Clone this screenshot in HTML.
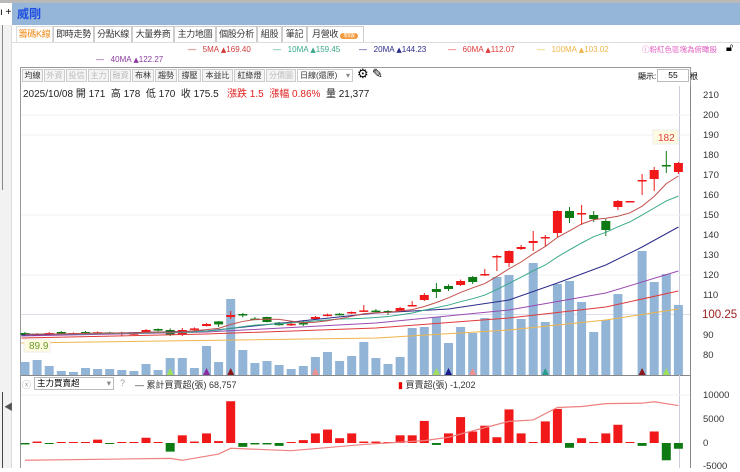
<!DOCTYPE html>
<html><head><meta charset="utf-8"><style>
*{margin:0;padding:0;box-sizing:border-box}
body{width:740px;height:468px;overflow:hidden;background:#fff;font-family:"Liberation Sans","Noto Sans CJK TC",sans-serif;position:relative}
.a{position:absolute;white-space:nowrap}
.tab{position:absolute;top:26px;height:17px;border:1px solid #ccc;border-bottom:none;background:#fff;font-size:9px;line-height:15px;text-align:center;color:#333;white-space:nowrap;overflow:hidden;letter-spacing:-0.3px}
.tb{position:absolute;top:69px;height:13px;border:1px solid #ccc;font-size:8px;line-height:11px;text-align:center;color:#333;background:#f4f4f4;white-space:nowrap;overflow:hidden}
.tb.g{color:#bbb}
.ax{position:absolute;left:703px;font-size:9.5px;color:#333}
.lg{position:absolute;top:45px;font-size:8px;white-space:nowrap}
.t{font-family:"DejaVu Sans",sans-serif;font-size:7px}
</style></head><body>
<div class="a" style="left:0;top:0;width:740px;height:3px;background:#b9b9b9"></div>
<div class="a" style="left:0;top:3px;width:740px;height:22px;background:#95b5d9"></div>
<div class="a" style="left:0;top:3px;width:12px;height:22px;background:#fff;font-size:10px;line-height:20px">ı +</div>
<div class="a" style="left:17px;top:5px;font-size:12px;font-weight:bold;color:#1f4fe0">威剛</div>
<div class="a" style="left:0;top:25px;width:12px;height:443px;background:#f2f2f2;border-right:1px solid #ddd"></div>
<div class="a" style="left:2px;top:25px;width:1px;height:165px;background:#888"></div>
<div class="a" style="left:2px;top:392px;width:1px;height:76px;background:#444"></div>
<div class="a" style="left:4px;top:400px;font-size:9px;color:#555">◀</div>
<div class="tab" style="left:16px;width:37px;color:#f08a17;border-color:#ddd">籌碼K線</div>
<div class="tab" style="left:53px;width:41px">即時走勢</div>
<div class="tab" style="left:94px;width:38px">分點K線</div>
<div class="tab" style="left:132px;width:42px">大量券商</div>
<div class="tab" style="left:174px;width:42px">主力地圖</div>
<div class="tab" style="left:216px;width:41px">個股分析</div>
<div class="tab" style="left:257px;width:25px">組股</div>
<div class="tab" style="left:282px;width:25px">筆記</div>
<div class="tab" style="left:307px;width:57px;text-align:left;padding-left:4px">月營收 <span style="background:#f39a3c;color:#fff;border-radius:6px;font-size:6px;padding:0 3px">新版</span></div>
<div class="a" style="left:12px;top:42px;width:728px;height:1px;background:#ddd"></div>
<div class="lg" style="left:188px;color:#d23a3a">—&nbsp;&nbsp; 5MA <span class="t">▲</span>169.40</div>
<div class="lg" style="left:273px;color:#3aa88b">—&nbsp;&nbsp; 10MA <span class="t">▲</span>159.45</div>
<div class="lg" style="left:359px;color:#2c2c8a">—&nbsp;&nbsp; 20MA <span class="t">▲</span>144.23</div>
<div class="lg" style="left:448px;color:#e03a3a">—&nbsp;&nbsp; 60MA <span class="t">▲</span>112.07</div>
<div class="lg" style="left:537px;color:#f0b54a">—&nbsp;&nbsp; 100MA <span class="t">▲</span>103.02</div>
<div class="lg" style="top:44px;left:642px;font-size:7.5px;color:#e060c0">ⓘ粉紅色區塊為俯瞰股</div>
<div class="a" style="top:42px;left:726px;font-size:11px">🔓︎</div>
<div class="lg" style="top:55px;left:96px;color:#8a3aa0">—&nbsp;&nbsp; 40MA <span class="t">▲</span>122.27</div>
<div class="a" style="left:20px;top:67px;width:671px;height:401px;border:1px solid #999;border-bottom:none"></div>
<div class="tb" style="left:22px;width:21px">均線</div>
<div class="tb g" style="left:44px;width:21px">外資</div>
<div class="tb g" style="left:66px;width:21px">投信</div>
<div class="tb g" style="left:88px;width:21px">主力</div>
<div class="tb g" style="left:110px;width:21px">融資</div>
<div class="tb" style="left:132px;width:22px">布林</div>
<div class="tb" style="left:155px;width:22px">趨勢</div>
<div class="tb" style="left:178px;width:23px">撐壓</div>
<div class="tb" style="left:202px;width:31px">本益比</div>
<div class="tb" style="left:234px;width:31px">紅綠燈</div>
<div class="tb g" style="left:266px;width:30px">分價圖</div>
<div class="tb" style="left:297px;width:56px;background:#fff;text-align:left;padding-left:2px">日線(還原) <span style="float:right;color:#888;padding-right:2px">▾</span></div>
<div class="a" style="left:357px;top:66px;font-size:13px">⚙</div>
<div class="a" style="left:372px;top:66px;font-size:13px">✎</div>
<div class="a" style="left:638px;top:71px;font-size:8px">顯示:</div>
<div class="a" style="left:657px;top:69px;width:32px;height:13px;border:1px solid #bbb;font-size:8.5px;text-align:center;line-height:11px">55</div>
<div class="a" style="left:690px;top:71px;font-size:8px">根</div>
<div class="a" style="left:23px;top:85px;font-size:10px;color:#222">2025/10/08 開 171&nbsp; 高 178&nbsp; 低 170&nbsp; 收 175.5&nbsp;&nbsp; <span style="color:#e02020">漲跌 1.5&nbsp; 漲幅 0.86%</span>&nbsp; 量 21,377</div>
<div class="ax" style="top:90px">210</div><div class="ax" style="top:110px">200</div><div class="ax" style="top:130px">190</div><div class="ax" style="top:150px">180</div><div class="ax" style="top:170px">170</div><div class="ax" style="top:190px">160</div><div class="ax" style="top:210px">150</div><div class="ax" style="top:230px">140</div><div class="ax" style="top:250px">130</div><div class="ax" style="top:270px">120</div><div class="ax" style="top:290px">110</div><div class="ax" style="top:330px">90</div><div class="ax" style="top:350px">80</div>
<div class="ax" style="top:309px;font-size:11.5px;color:#a02020;left:702px">100.25</div>
<div class="ax" style="top:390px">10000</div><div class="ax" style="top:414px">5000</div><div class="ax" style="top:438px">0</div><div class="ax" style="top:461px">-5000</div>
<div class="a" style="left:22px;top:378px;font-size:9px;color:#999">ⓧ</div>
<div class="a" style="left:34px;top:377px;width:80px;height:13px;border:1px solid #bbb;font-size:8.5px;line-height:11px;padding-left:2px">主力買賣超<span style="float:right;color:#888;padding-right:2px">▾</span></div>
<div class="a" style="left:120px;top:378px;font-size:9px;color:#999">?</div>
<div class="a" style="left:135px;top:378px;font-size:9px;color:#333">— 累計買賣超(張) 68,757</div>
<div class="a" style="left:398px;top:378px;font-size:9px;color:#333"><span style="color:#e00">▮</span> 買賣超(張) -1,202</div>
<svg class="a" style="left:0;top:0" width="740" height="468" id="s"></svg>
<script>
var S=document.getElementById('s'),h='';
function y(p){return 95+(210-p)*2}
function X(i){return 25+i*12.1}
h+='<line x1="21" y1="375.5" x2="690" y2="375.5" stroke="#888"/>';
h+='<line x1="690.5" y1="86" x2="690.5" y2="468" stroke="#888"/>';
h+='<line x1="679.5" y1="86" x2="679.5" y2="468" stroke="#ccd"/>';
[200,190,150,120].forEach(function(p){h+='<line x1="21" y1="'+y(p)+'" x2="690" y2="'+y(p)+'" stroke="#f0f0f0"/>'});
h+='<line x1="21" y1="'+y(100.25)+'" x2="690" y2="'+y(100.25)+'" stroke="#dde"/>';
h+='<line x1="21" y1="395" x2="690" y2="395" stroke="#f0f0f0"/>';
var vt=[362,360,366,371,372,368,369,369,370,371,364,370,358,358,368,346,362,299,350,363,361,365,369,366,357,352,361,356,342,358,364,357,328,327,317,343,327,333,318,277,275,319,263,322,284,281,302,332,320,294,375,251,282,274,305];
vt.forEach(function(t,i){h+='<rect x="'+(X(i)-4.5)+'" y="'+t+'" width="9" height="'+(375-t)+'" fill="#92b4d6"/>'});
var c=[[91,90,91.5,89.5],[90.5,90.5,91,90],[90.5,91,91.5,90],[91.5,90.8,92,90.5],[91,91,91.3,90.7],[91.5,90.8,92,90.5],[90.8,91.4,91.8,90.5],[91.3,90.8,91.6,90.5],[90.5,91.2,91.6,89.5],[90.4,90.9,91.2,90],[91.5,92.5,93,91.3],[93,92.2,93.3,91.8],[92.5,90,93.3,89.5],[90,92.5,93.5,89.5],[92.6,93.3,93.8,92.3],[94.5,95.5,96,94.3],[96.8,95.3,97,94],[99,100,102,98],[100.5,99.8,101,98.8],[98.2,98,99,97.4],[99,96.5,99.2,96.3],[96.2,94.9,96.5,94.7],[94.8,95.6,96,94.5],[96,95.8,97.5,94.5],[98,99,99.5,97.8],[99.6,100.2,100.7,99.3],[100.6,100.2,101,99.8],[100.8,101.5,101.8,100.5],[101.8,102.3,105,101.5],[102.2,101.5,103,101],[102,101.2,102.5,100],[102,103.5,104,101.5],[104.8,105,107,104.5],[107.5,110,111,107],[113,111.5,116,108.5],[114.5,113,115.3,112],[115,117,117.7,114.5],[119,116.5,119.5,115.5],[120.2,120.5,123,119.5],[129,129.5,130,122],[126,132,132.3,124],[133,134,135,132.5],[136,137,142,132],[138.5,139,140,134],[141,152,152.3,139],[152,148.5,154,146],[151,151,155,145],[150,148,152,146.5],[147,142.5,148,139.5],[154,157,157.5,152.5],[157,157,157,157],[167,167.5,170.5,160],[168,172.5,174,162],[175,174.5,182,171],[171.5,176,176.5,170.5]];
c.forEach(function(d,i){var o=d[0],cl=d[1],up=cl>=o,col=up?'#f01818':'#0e7a14',x=X(i);
h+='<line x1="'+x+'" y1="'+y(d[2])+'" x2="'+x+'" y2="'+y(d[3])+'" stroke="'+col+'"/>';
var t=y(Math.max(o,cl)),b=y(Math.min(o,cl));h+='<rect x="'+(x-4.5)+'" y="'+t+'" width="9" height="'+Math.max(1.5,b-t)+'" fill="'+col+'"/>'});
function ma(n,col){var p=[];for(var i=0;i<55;i++){var s=0;for(var k=0;k<n;k++){var j=i-k;s+=j>=0?c[j][1]:90.5}p.push(X(i)+','+y(s/n))}h+='<polyline points="'+p.join(' ')+'" fill="none" stroke="'+col+'" stroke-width="1"/>'}
function pl(pts,col){var p=pts.map(function(q){return X(q[0])+','+y(q[1])});h+='<polyline points="'+p.join(' ')+'" fill="none" stroke="'+col+'" stroke-width="1"/>'}
pl([[-0.3,86],[29,88.5],[40,92.5],[48,97.5],[54,103]],'#f0b54a');
pl([[-0.3,88.5],[15,90.5],[29,93.5],[40,98.5],[48,104],[54,112]],'#e03a3a');
pl([[-0.3,89.5],[15,91.5],[29,96],[40,102.5],[48,111],[54,122]],'#9a4ab0');
pl([[-0.3,90],[15,92],[29,101],[35,103],[40,107.5],[44,116],[48,125],[51,134],[54,144]],'#2c2c8a');
ma(10,'#3aa88b');ma(5,'#c0504d');
h+='<rect x="24" y="339" width="26" height="13" fill="#fffbe0" stroke="#eee"/><text x="29" y="349" font-size="10" fill="#6a9a2a" font-family="Liberation Sans">89.9</text>';
h+='<rect x="653" y="130" width="25" height="14" fill="#fffbe0" stroke="#eee"/><text x="658" y="141" font-size="10" fill="#e04040" font-family="Liberation Sans">182</text>';
[[12,'#9ee05a'],[15,'#8a2aa0'],[17,'#8a1a1a'],[24,'#f09090'],[34,'#9ee05a'],[35,'#1a1a8a'],[37,'#f09090'],[43,'#2a9a8a'],[51,'#8a1a1a'],[53,'#9ee05a']].forEach(function(t){var x=X(t[0]);h+='<polygon points="'+(x-3.5)+',375 '+(x+3.5)+',375 '+x+',368" fill="'+t[1]+'"/>'});
var b=[-0.3,0.3,-0.1,0.2,0.1,0.1,0.7,-0.2,0.2,0.2,1.1,0,-1.8,1.6,0.3,2,0.4,8.7,-0.8,-0.3,-0.3,-0.6,0,0.6,2,2.8,1,2,0.3,0.3,0.2,1.6,1.6,4.6,-0.4,2,5.4,2.4,3.6,1.2,7,2,0.2,4.5,7.1,-1,1,0.2,2,3.8,0,-0.6,2.4,-3.6,-1.2];
b.forEach(function(v,i){var hh=Math.max(1,Math.abs(v)*4.8),col=v>=0?'#f01818':'#0e7a14';h+='<rect x="'+(X(i)-4.5)+'" y="'+(v>=0?443-hh:443)+'" width="9" height="'+hh+'" fill="'+col+'"/>'});
var cum=[[0,-3.6],[12,-3.2],[13,-3.6],[16,-2.3],[17,-1.1],[22,-1.6],[28,-0.3],[33,0.5],[35,1.2],[38,3.2],[40,4.5],[42,4.8],[44,7.4],[46,7.6],[48,8.2],[51,8.3],[52,8.6],[54,7.8]];
h+='<polyline points="'+cum.map(function(q){return X(q[0])+','+(443-q[1]*4.8)}).join(' ')+'" fill="none" stroke="#f08080" stroke-width="1.2"/>';
S.innerHTML=h;
</script>
</body></html>
